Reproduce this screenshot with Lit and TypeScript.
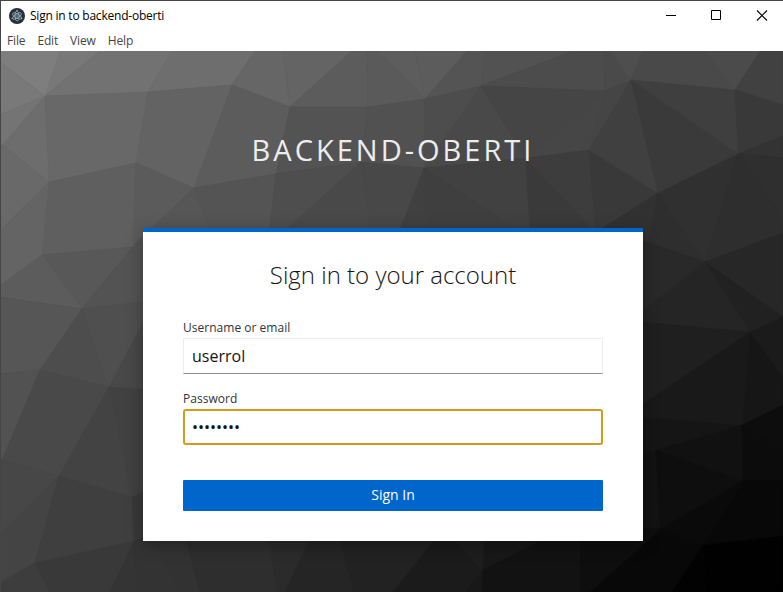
import { LitElement, html, css, svg } from "lit";
import { customElement } from "lit/decorators.js";

// Facets of the low-poly backdrop: grey level, then the corner points.
// Coordinates are window pixels; the view box starts below the menu bar.
const FACETS: [number, string][] = [
  [126, "0,51 60,51 45,96 0,62"],
  [120, "60,51 100,51 45,96"],
  [121, "0,62 45,96 0,115"],
  [116, "0,115 45,96 3,145 0,145"],
  [114, "100,51 172,51 148,92 45,96"],
  [110, "172,51 255,51 232,85 148,92"],
  [109, "45,96 49,182 3,145"],
  [104, "45,96 148,92 136,163 49,182"],
  [105, "0,145 3,145 49,182 1,230 0,230"],
  [99, "148,92 232,85 194,188 136,163"],
  [102, "255,51 283,51 290,107 232,85"],
  [100, "283,51 352,51 290,107"],
  [92, "232,85 290,107 276,174 194,188"],
  [100, "49,182 45,228 42,255 0,286 0,230"],
  [95, "49,182 136,163 133,247 42,255"],
  [91, "136,163 194,188 150,230 133,247"],
  [86, "194,188 212,235 143,240 150,230"],
  [84, "194,188 276,174 269,235 212,235"],
  [92, "352,51 367,51 368,107 290,107"],
  [90, "367,51 378,51 425,99 368,107"],
  [93, "378,51 415,51 425,99"],
  [92, "415,51 467,51 425,99"],
  [83, "290,107 368,107 361,162 276,174"],
  [81, "368,107 425,99 424,168 361,162"],
  [78, "276,174 361,162 280,235 269,235"],
  [73, "361,162 372,235 280,235"],
  [72, "361,162 424,168 398,235 372,235"],
  [84, "467,51 485,51 481,86 425,99"],
  [82, "485,51 573,51 481,86"],
  [77, "425,99 481,86 424,168"],
  [73, "481,86 526,158 424,168"],
  [76, "573,51 604,51 605,91 481,86"],
  [69, "481,86 605,91 526,158"],
  [64, "424,168 427,235 398,235"],
  [63, "424,168 526,235 427,235"],
  [65, "424,168 526,158 530,235 526,235"],
  [74, "604,51 610,51 631,80 605,91"],
  [78, "610,51 643,51 631,80"],
  [70, "605,91 589,150 526,158"],
  [69, "605,91 631,80 589,150"],
  [58, "526,158 595,230 595,235 530,235"],
  [61, "526,158 589,150 594,230"],
  [57, "589,150 658,193 595,230"],
  [64, "631,80 658,193 589,150"],
  [73, "643,51 705,51 735,90 631,80"],
  [75, "705,51 760,51 735,90"],
  [63, "631,80 735,90 738,154"],
  [58, "631,80 738,154 658,193"],
  [65, "760,51 783,51 783,105 735,90"],
  [57, "735,90 783,105 783,136 738,154"],
  [51, "738,154 783,136 783,158"],
  [47, "738,154 783,158 783,217"],
  [49, "658,193 649,243 590,235"],
  [46, "658,193 705,262 649,243"],
  [48, "658,193 738,154 705,262"],
  [46, "738,154 783,217 783,233 705,262"],
  [41, "640,240 649,243 705,262 640,313"],
  [37, "705,262 750,332 640,322 640,313"],
  [39, "705,262 783,233 783,317"],
  [33, "705,262 783,317 750,332"],
  [31, "640,322 750,332 640,406"],
  [25, "750,332 742,425 640,417 640,406"],
  [22, "750,332 783,377 783,405 742,425"],
  [27, "750,332 783,317 783,377"],
  [21, "640,417 742,425 656,450 640,453"],
  [18, "640,453 656,450 661,529 640,529"],
  [17, "742,425 743,481 656,450"],
  [13, "742,425 783,405 783,450"],
  [12, "742,425 783,450 783,481 743,481"],
  [14, "656,450 743,481 661,529"],
  [8, "743,481 783,481 783,536 703,545"],
  [10, "743,481 703,545 661,529"],
  [14, "640,529 661,529 590,592 580,592 580,540"],
  [8, "661,529 703,545 672,592 590,592"],
  [1, "703,545 783,536 783,592 706,592"],
  [2, "703,545 706,592 672,592"],
  [88, "42,255 133,247 82,309"],
  [92, "42,255 82,309 0,297 0,286"],
  [83, "133,247 150,228 150,301 82,309"],
  [86, "0,297 82,309 40,370 0,374"],
  [77, "82,309 109,387 40,370"],
  [79, "82,309 150,301 150,310 109,387"],
  [82, "0,374 40,370 2,460 0,460"],
  [73, "40,370 109,387 59,476 2,460"],
  [72, "109,387 150,310 150,390"],
  [67, "109,387 132,497 59,476"],
  [65, "109,387 150,390 150,493 132,497"],
  [71, "0,460 2,460 59,476 0,534"],
  [68, "0,534 59,476 35,563 0,583"],
  [63, "59,476 132,497 134,541 35,563"],
  [57, "132,497 150,490 150,545 134,541"],
  [61, "0,583 35,563 50,592 0,592"],
  [57, "35,563 134,541 110,592 50,592"],
  [52, "134,541 138,592 110,592"],
  [51, "134,541 150,535 182,592 138,592"],
  [50, "150,535 185,535 200,592 182,592"],
  [46, "185,535 269,535 277,592 200,592"],
  [43, "269,535 312,535 285,592 277,592"],
  [37, "312,535 339,535 354,592 285,592"],
  [34, "339,535 438,535 393,592 354,592"],
  [27, "438,535 450,535 483,570 465,592 393,592"],
  [30, "450,535 484,535 483,570"],
  [24, "484,535 552,535 483,570"],
  [24, "483,570 482,592 465,592"],
  [18, "483,570 552,535 580,535 580,592 482,592"],
];

@customElement("app-root")
export class AppRoot extends LitElement {
  static styles = css`
    :host {
      display: block;
      height: 100vh;
      font-family: "Open Sans", "Noto Sans", sans-serif;
    }
    * { box-sizing: border-box; }
    .window {
      height: 100%;
      display: flex;
      flex-direction: column;
      border-top: 1px solid #464446;
      border-left: 1px solid #464446;
      background: #fff;
      overflow: hidden;
    }
    .titlebar {
      height: 29px;
      flex: none;
      display: flex;
      align-items: center;
      padding-left: 8px;
    }
    .logo { width: 16px; height: 16px; display: block; }
    .title {
      font-size: 12px;
      line-height: 16px;
      letter-spacing: -0.22px;
      color: #000;
      margin-left: 5px;
      flex: 1;
      white-space: nowrap;
    }
    .controls { display: flex; padding-right: 1px; }
    .controls svg { width: 45px; height: 29px; display: block; }
    .menubar {
      height: 21px;
      flex: none;
      display: flex;
      gap: 12px;
      padding-left: 6px;
      font-size: 12px;
      line-height: 21px;
      color: #444;
      letter-spacing: -0.15px;
    }
    .page {
      flex: 1;
      display: grid;
      min-height: 0;
      background: #444;
    }
    .backdrop, .content { grid-area: 1 / 1; min-width: 0; min-height: 0; }
    .backdrop { width: 100%; height: 100%; display: block; }
    .content {
      position: relative;
      display: flex;
      flex-direction: column;
      align-items: center;
      padding-left: 2px;
    }
    .realm {
      margin: 78px 0 0;
      height: 99px;
      line-height: 42px;
      font-size: 29px;
      font-weight: 400;
      letter-spacing: 3px;
      color: #ededed;
      text-transform: uppercase;
      white-space: nowrap;
    }
    .card {
      width: 500px;
      height: 313px;
      flex: none;
      background: #fff;
      border-top: 4px solid #06c;
      padding: 24px 40px 30px;
      box-shadow: 0 4px 16px rgba(3, 3, 3, 0.32);
      display: flex;
      flex-direction: column;
    }
    .heading {
      margin: 0 0 29px;
      font-size: 24px;
      line-height: 38px;
      font-weight: 300;
      text-align: center;
      color: #151515;
      white-space: nowrap;
    }
    .field { display: flex; flex-direction: column; height: 71px; margin: 0; }
    .label {
      font-size: 12px;
      line-height: 16px;
      height: 15px;
      margin-top: -3px;
      margin-bottom: 3px;
      color: #333;
      letter-spacing: 0.02px;
    }
    .input {
      width: 100%;
      height: 36px;
      padding: 0 8px;
      border: 1px solid #ededed;
      border-bottom-color: #8a8d90;
      border-radius: 0;
      background: #fff;
      color: #151515;
      font: 400 16px "Open Sans", sans-serif;
      outline: none;
    }
    .focused {
      border: 2px solid #d19b1e;
      border-radius: 3px;
      padding: 0 7px;
    }
    .submit {
      margin-top: 15px;
      height: 31px;
      border: 0;
      border-radius: 1px;
      padding: 0 0 1px;
      background: #06c;
      color: #fff;
      font: 400 14px/20px "Open Sans", sans-serif;
    }
  `;

  render() {
    return html`
      <div class="window">
        <header class="titlebar">
          <svg class="logo" viewBox="0 0 16 16">
            <circle cx="8" cy="8" r="8" fill="#2b2e3a" />
            <g fill="none" stroke="#9fc4cc" stroke-width="0.7">
              <ellipse cx="8" cy="8" rx="5" ry="2" transform="rotate(28 8 8)" />
              <ellipse cx="8" cy="8" rx="5" ry="2" transform="rotate(88 8 8)" />
              <ellipse cx="8" cy="8" rx="5" ry="2" transform="rotate(148 8 8)" />
            </g>
            <g fill="#9fc4cc">
              <circle cx="8" cy="8" r="0.7" />
              <circle cx="3.3" cy="10.4" r="0.7" />
              <circle cx="12.7" cy="10.4" r="0.7" />
              <circle cx="8" cy="2.8" r="0.7" />
            </g>
          </svg>
          <span class="title">Sign in to backend-oberti</span>
          <div class="controls">
            <svg viewBox="0 0 45 29"><path d="M19 14.5h10" stroke="#000" /></svg>
            <svg viewBox="0 0 45 29"><path d="M19.5 9.5h9v9h-9z" fill="none" stroke="#000" /></svg>
            <svg viewBox="0 0 45 29"><path d="M20 9.5l10 10M30 9.5l-10 10" stroke="#000" stroke-width="1.1" /></svg>
          </div>
        </header>
        <nav class="menubar">
          <span>File</span><span>Edit</span><span>View</span><span>Help</span>
        </nav>
        <main class="page">
          <svg class="backdrop" viewBox="1 51 782 541" preserveAspectRatio="none">
            ${FACETS.map(([g, points]) => {
              const c = `rgb(${g},${g},${g})`;
              return svg`<polygon points=${points} fill=${c} stroke=${c} stroke-width="0.6" />`;
            })}
          </svg>
          <div class="content">
            <h1 class="realm">backend-oberti</h1>
            <section class="card">
              <h2 class="heading">Sign in to your account</h2>
              <div class="field">
                <label class="label" for="username">Username or email</label>
                <input class="input" id="username" type="text" .value=${"userrol"} />
              </div>
              <div class="field">
                <label class="label" for="password">Password</label>
                <input class="input focused" id="password" type="password" .value=${"password"} />
              </div>
              <button class="submit">Sign In</button>
            </section>
          </div>
        </main>
      </div>
    `;
  }
}
